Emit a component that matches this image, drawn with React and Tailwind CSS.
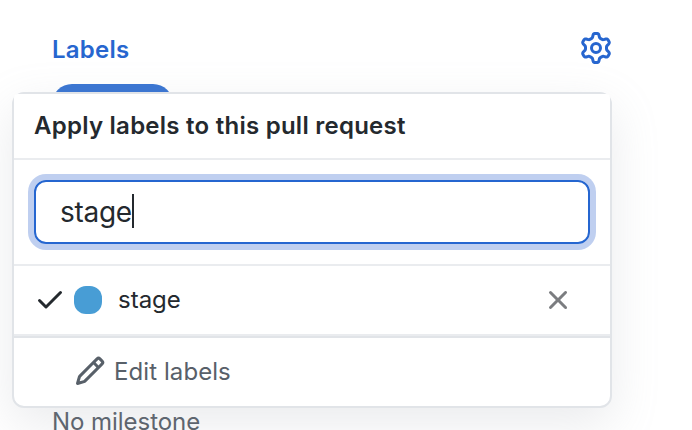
const gearPath =
  "M8 0a8.2 8.2 0 0 1 .701.031C9.444.095 9.99.645 10.16 1.29l.288 1.107c.018.066.079.158.212.224.231.114.454.243.668.386.123.082.233.09.299.071l1.103-.303c.644-.176 1.392.021 1.82.63.27.385.506.792.704 1.218.315.675.111 1.422-.364 1.891l-.814.806c-.049.048-.098.147-.088.294.016.257.016.515 0 .772-.01.147.038.246.088.294l.814.806c.475.469.679 1.216.364 1.891a7.977 7.977 0 0 1-.704 1.217c-.428.61-1.176.807-1.82.63l-1.102-.302c-.067-.019-.177-.011-.3.071a5.909 5.909 0 0 1-.668.386c-.133.066-.194.158-.211.224l-.29 1.106c-.168.646-.715 1.196-1.458 1.26a8.006 8.006 0 0 1-1.402 0c-.743-.064-1.289-.614-1.458-1.26l-.289-1.106c-.018-.066-.079-.158-.212-.224a5.738 5.738 0 0 1-.668-.386c-.123-.082-.233-.09-.299-.071l-1.103.303c-.644.176-1.392-.021-1.82-.63a8.12 8.12 0 0 1-.704-1.218c-.315-.675-.111-1.422.363-1.891l.815-.806c.05-.048.098-.147.088-.294a6.214 6.214 0 0 1 0-.772c.01-.147-.038-.246-.088-.294l-.815-.806C.635 6.045.431 5.298.746 4.623a7.92 7.92 0 0 1 .704-1.217c.428-.61 1.176-.807 1.82-.63l1.102.302c.067.019.177.011.3-.071.214-.143.437-.272.668-.386.133-.066.194-.158.211-.224l.29-1.106C6.009.645 6.556.095 7.299.03 7.53.01 7.764 0 8 0Zm-.571 1.525c-.036.003-.108.036-.137.146l-.289 1.105c-.147.561-.549.967-.998 1.189-.173.086-.34.183-.5.29-.417.278-.97.423-1.529.27l-1.103-.303c-.109-.03-.175.016-.195.045-.22.312-.412.644-.573.99-.014.031-.021.11.059.19l.815.806c.411.406.562.957.53 1.456a4.709 4.709 0 0 0 0 .582c.032.499-.119 1.05-.53 1.456l-.815.806c-.081.08-.073.159-.059.19.162.346.353.677.573.989.02.03.085.076.195.046l1.102-.303c.56-.153 1.113-.008 1.53.27.161.107.328.204.501.29.447.222.85.629.997 1.189l.289 1.105c.029.109.101.143.137.146a6.6 6.6 0 0 0 1.142 0c.036-.003.108-.036.137-.146l.289-1.105c.147-.561.549-.967.998-1.189.173-.086.34-.183.5-.29.417-.278.97-.423 1.529-.27l1.103.303c.109.029.175-.016.195-.045.22-.313.411-.644.573-.99.014-.031.021-.11-.059-.19l-.815-.806c-.411-.406-.562-.957-.53-1.456a4.709 4.709 0 0 0 0-.582c-.032-.499.119-1.05.53-1.456l.815-.806c.081-.08.073-.159.059-.19a6.464 6.464 0 0 0-.573-.989c-.02-.03-.085-.076-.195-.046l-1.102.303c-.56.153-1.113.008-1.53-.27a4.44 4.44 0 0 0-.501-.29c-.447-.222-.85-.629-.997-1.189l-.289-1.105c-.029-.11-.101-.143-.137-.146a6.6 6.6 0 0 0-1.142 0ZM11 8a3 3 0 1 1-6 0 3 3 0 0 1 6 0ZM9.5 8a1.5 1.5 0 1 0-3.001.001A1.5 1.5 0 0 0 9.5 8Z";
const pencilPath =
  "M11.013 1.427a1.75 1.75 0 0 1 2.474 0l1.086 1.086a1.75 1.75 0 0 1 0 2.474l-8.61 8.61c-.21.21-.47.364-.756.445l-3.251.93a.75.75 0 0 1-.927-.928l.929-3.25c.081-.286.235-.547.445-.758l8.61-8.61Zm1.414 1.06a.25.25 0 0 0-.354 0L10.811 3.75l1.439 1.44 1.263-1.263a.25.25 0 0 0 0-.354l-1.086-1.086ZM11.189 6.25 9.75 4.81l-6.286 6.287a.25.25 0 0 0-.064.108l-.558 1.953 1.953-.558a.249.249 0 0 0 .108-.064l6.286-6.286Z";
const checkPath =
  "M13.78 4.22a.75.75 0 0 1 0 1.06l-7.25 7.25a.75.75 0 0 1-1.06 0L2.22 9.28a.751.751 0 0 1 .018-1.042.751.751 0 0 1 1.042-.018L6 10.94l6.72-6.72a.75.75 0 0 1 1.06 0Z";
const xPath =
  "M3.72 3.72a.75.75 0 0 1 1.06 0L8 6.94l3.22-3.22a.749.749 0 0 1 1.275.326.749.749 0 0 1-.215.734L9.06 8l3.22 3.22a.749.749 0 0 1-.326 1.275.749.749 0 0 1-.734-.215L8 9.06l-3.22 3.22a.751.751 0 0 1-1.042-.018.751.751 0 0 1-.018-1.042L6.94 8 3.72 4.78a.75.75 0 0 1 0-1.06Z";

function Icon({ path, className }) {
  return (
    <svg viewBox="0 0 16 16" fill="currentColor" className={`size-8 shrink-0 ${className}`}>
      <path fillRule="evenodd" d={path} />
    </svg>
  );
}

function LabelMenu() {
  return (
    <div className="absolute top-[92px] left-3 w-[600px] rounded-xl border-2 border-[#e1e4e8] bg-white shadow-[0_16px_48px_rgba(149,157,165,0.2)]">
      <div className="flex h-[66px] items-center rounded-t-[4px] border-b-2 border-[#eaecef] bg-white pl-5 font-semibold tracking-[0.25px]">
        Apply labels to this pull request
      </div>
      <div className="h-[106px] border-b-2 border-[#eaecef] px-5 pt-5">
        <div className="flex h-16 items-center rounded-xl border-2 border-[#2566d0] pl-6 text-[28px] shadow-[0_0_0_6px_#bfcff0]">
          <span className="pt-0.5 tracking-[-0.3px]">stage</span>
          <span className="-mt-0.5 h-[34px] w-0.5 bg-[#24292e]" />
        </div>
      </div>
      <div className="flex h-[70px] items-center border-b-2 border-[#eaecef] pr-9 pl-5">
        <Icon path={checkPath} className="mb-[3px] text-[#24292e]" />
        <span className="ml-2 size-7 rounded-[12px] bg-[#489dd5]" />
        <span className="ml-4 grow">stage</span>
        <Icon path={xPath} className="text-[#7b7d80]" />
      </div>
      <div className="flex h-[70px] items-center border-t-2 border-[#e1e4e8] pl-[60px] text-[#586069]">
        <Icon path={pencilPath} className="mb-[3px]" />
        <span className="ml-2 tracking-[0.08px]">Edit labels</span>
      </div>
    </div>
  );
}

export default function App() {
  return (
    <main className="relative h-[430px] w-[692px] overflow-hidden bg-white font-['Inter',sans-serif] text-2xl text-[#24292e]">
      <header className="flex h-24 items-center justify-between pr-20 pl-[52px] text-[#2766cf]">
        <h2 className="pt-1 font-semibold tracking-[0.25px]">Labels</h2>
        <Icon path={gearPath} className="" />
      </header>
      <div className="-mt-3 ml-[52px] h-10 w-[121px] rounded-full bg-[#3975d3]" />
      <p className="mt-[282px] ml-[52px] tracking-[-0.05px] text-[#586069]">No milestone</p>
      <LabelMenu />
    </main>
  );
}
